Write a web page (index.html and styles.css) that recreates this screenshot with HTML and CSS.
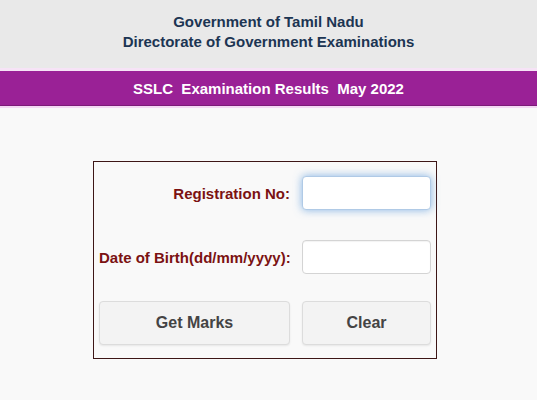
FILE: index.html
```html
<!doctype html>
<html lang="en">
<head>
    <meta charset="UTF-8">
    <title>SSLC Examination Results May 2022</title>
    <link rel="stylesheet" href="styles.css">
</head>
<body>
    <div class="header">
        <div>Government of Tamil Nadu</div>
        <div>Directorate of Government Examinations</div>
    </div>
    <div class="band">SSLC &nbsp;Examination Results &nbsp;May 2022</div>
    <form class="result_form" id="result_form">
        <div class="row">
            <label for="regno">Registration No:</label>
            <input type="text" name="regno" id="regno" autofocus>
        </div>
        <div class="row">
            <label for="dob">Date of Birth(dd/mm/yyyy):</label>
            <input type="text" name="dob" id="dob">
        </div>
        <div class="row actions">
            <button type="submit">Get Marks</button>
            <button type="reset">Clear</button>
        </div>
    </form>
</body>
</html>
```

FILE: styles.css
```css
* {
    font-family: 'Liberation Sans', Arial, sans-serif;
    margin: 0;
    padding: 0;
    box-sizing: border-box;
}
body {
    background: #f9f9f9;
    overflow: hidden;
}
.header {
    background: #e9e9e9;
    height: 68px;
    padding-top: 12px;
    text-align: center;
    color: #1c3553;
    font-weight: bold;
    font-size: 15px;
    line-height: 20px;
}
.band {
    background: #9a2196;
    border-top: 3px solid #f6e3f6;
    border-bottom: 2px solid #f4d8f4;
    box-shadow: inset 0 -1px 0 #7c1a78;
    height: 40px;
    line-height: 35px;
    text-align: center;
    color: #fff;
    font-weight: bold;
    font-size: 15px;
}
.result_form {
    width: 344px;
    margin: 53px 0 0 93px;
    border: 1px solid #3d1616;
    padding: 14px 5px 13px 5px;
}
.row {
    display: grid;
    grid-template-columns: 191px 129px;
    column-gap: 12px;
    align-items: center;
    height: 34px;
}
.row + .row {
    margin-top: 30px;
}
.row.actions {
    margin-top: 27px;
    height: 44px;
}
label {
    text-align: right;
    color: #7b1212;
    font-weight: bold;
    font-size: 15px;
    white-space: nowrap;
}
input {
    height: 34px;
    width: 129px;
    border: 1px solid #d4d4d4;
    border-radius: 4px;
    background: #fff;
    box-shadow: inset 0 1px 1px rgba(0, 0, 0, 0.05);
    padding: 0 6px;
    font-size: 14px;
    outline: none;
}
input:focus {
    border-color: #b0cae6;
    box-shadow: 0 0 8px rgba(82, 150, 220, 0.7);
}
button {
    height: 44px;
    border: 1px solid #dcdcdc;
    border-radius: 4px;
    background: #f3f3f3;
    box-shadow: 0 1px 2px rgba(0, 0, 0, 0.08);
    color: #444;
    font-weight: bold;
    font-size: 16px;
}
```
